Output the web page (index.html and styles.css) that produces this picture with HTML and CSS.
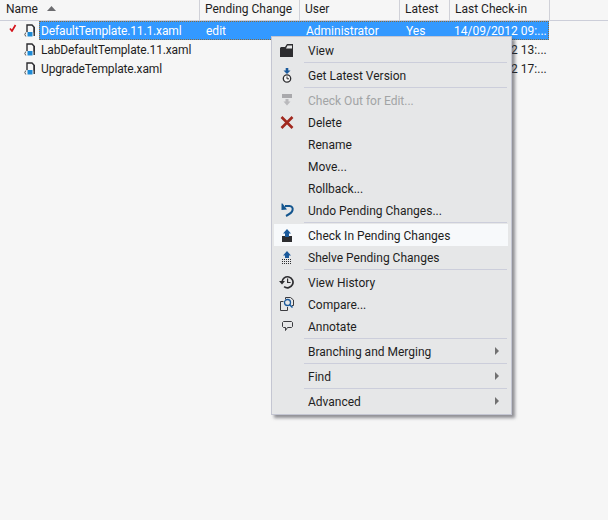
FILE: index.html
```html
<!DOCTYPE html>
<html lang="en">
<head>
<meta charset="utf-8">
<title>Source Control Explorer</title>
<link rel="stylesheet" href="styles.css">
</head>
<body>
<div class="explorer">
  <div class="header">
    <div class="hcell c-name"><span>Name</span><svg class="sort" width="9" height="5" viewBox="0 0 9 5"><path d="M0 5L4.5 0L9 5Z" fill="#6d6d70"/></svg></div>
    <div class="hcell c-pending">Pending Change</div>
    <div class="hcell c-user">User</div>
    <div class="hcell c-latest">Latest</div>
    <div class="hcell c-date">Last Check-in</div>
  </div>
  <div class="row">
    <div class="marker"><svg width="8" height="8" viewBox="0 0 8 8"><path d="M1 4.5L3 7L6.5 1" fill="none" stroke="#d4141c" stroke-width="1.7"/></svg></div>
    <svg class="fileicon" width="14" height="13" viewBox="0 0 14 13"><use href="#doc"/></svg>
    <div class="selected">
      <div class="sname">DefaultTemplate.11.1.xaml</div>
      <div class="spend">edit</div>
      <div class="suser">Administrator</div>
      <div class="slatest">Yes</div>
      <div class="sdate">14/09/2012 09:...</div>
    </div>
  </div>
  <div class="row">
    <div class="marker"></div>
    <svg class="fileicon" width="14" height="13" viewBox="0 0 14 13"><use href="#doc"/></svg>
    <div class="plain">
      <div class="pname">LabDefaultTemplate.11.xaml</div>
      <div class="pdate">14/09/2012 13:...</div>
    </div>
  </div>
  <div class="row">
    <div class="marker"></div>
    <svg class="fileicon" width="14" height="13" viewBox="0 0 14 13"><use href="#doc"/></svg>
    <div class="plain">
      <div class="pname">UpgradeTemplate.xaml</div>
      <div class="pdate">14/09/2012 17:...</div>
    </div>
  </div>
</div>

<svg class="defs" width="0" height="0" aria-hidden="true">
  <defs>
    <g id="doc">
      <path d="M3 8V1H8L10.2 3.2V8.5" fill="none" stroke="#2c2c30" stroke-width="1.4"/>
      <path d="M10.2 3V12" fill="none" stroke="#2c2c30" stroke-width="1.4"/>
      <path d="M1.8 8.5L0.8 10.5L1.8 12.5" fill="none" stroke="#555" stroke-width="1"/>
      <rect x="3.5" y="8" width="5" height="4.5" fill="#1c8ad6"/>
    </g>
  </defs>
</svg>

<div class="menu">
  <div class="item"><span class="ic"><svg width="14" height="13" viewBox="0 0 14 13"><path d="M0 4V13H13V0H7L5 3H1Z" fill="#2d2d30"/><path d="M7.5 1.5H12V4.5H6Z" fill="#e6e7e8"/></svg></span><span>View</span></div>
  <div class="sep"></div>
  <div class="item"><span class="ic"><svg width="10" height="15" viewBox="0 0 10 15"><path d="M3.7 0H6.3V2.5H8.5L5 6L1.5 2.5H3.7Z" fill="#1b5a9c"/><circle cx="5" cy="10.5" r="3.7" fill="#f5f5f5" stroke="#2d2d30" stroke-width="1.3"/><path d="M5 8.5V10.8H7" fill="none" stroke="#2d2d30"/></svg></span><span>Get Latest Version</span></div>
  <div class="sep"></div>
  <div class="item disabled"><span class="ic"><svg width="10" height="12" viewBox="0 0 10 12"><rect x="0" y="0" width="10" height="4" fill="#a9a9ac"/><path d="M3.5 5H6.5V7.5H8.5L5 11.5L1.5 7.5H3.5Z" fill="#b9b9bc"/></svg></span><span>Check Out for Edit...</span></div>
  <div class="item"><span class="ic"><svg width="14" height="13" viewBox="0 0 14 13"><path d="M1.5 1L12.5 12M12.5 1L1.5 12" stroke="#a1281e" stroke-width="2.6"/></svg></span><span>Delete</span></div>
  <div class="item"><span class="ic"></span><span>Rename</span></div>
  <div class="item"><span class="ic"></span><span>Move...</span></div>
  <div class="item"><span class="ic"></span><span>Rollback...</span></div>
  <div class="item"><span class="ic"><svg width="13" height="14" viewBox="0 0 13 14"><path d="M4 3H8.5C11 3 12 5 11.6 7C11.2 9.5 8 11.5 5 13" fill="none" stroke="#14568f" stroke-width="2"/><path d="M0.5 0.5V7L6 6.5L1.5 0.5Z" fill="#14568f"/></svg></span><span>Undo Pending Changes...</span></div>
  <div class="sep"></div>
  <div class="item active"><span class="ic"><svg width="10" height="13" viewBox="0 0 10 13"><path d="M5 0L9 4.5H7V7H3V4.5H1Z" fill="#1b5a9c"/><path d="M0 7H10V13H0Z" fill="#2d2d30"/><path d="M3 6H7V8H3Z" fill="#1b5a9c"/></svg></span><span>Check In Pending Changes</span></div>
  <div class="item"><span class="ic"><svg width="10" height="13" viewBox="0 0 10 13"><path d="M5 0L9 4.5H7V7H3V4.5H1Z" fill="#1b5a9c"/><path d="M0 8.5H10M0 10.5H10M0 12.5H10" stroke="#2d2d30" stroke-dasharray="1 1"/></svg></span><span>Shelve Pending Changes</span></div>
  <div class="sep"></div>
  <div class="item"><span class="ic"><svg width="16" height="14" viewBox="0 0 16 14"><path d="M3 7A5.5 5.5 0 1 1 5.1 11.6" fill="none" stroke="#2d2d30" stroke-width="1.7"/><path d="M0 6H6L3 9.5Z" fill="#2d2d30"/><path d="M8.6 3.5V7.5H11.6" fill="none" stroke="#2d2d30" stroke-width="1.2"/></svg></span><span>View History</span></div>
  <div class="item"><span class="ic"><svg width="14" height="14" viewBox="0 0 14 14"><path d="M5.5 2.5V0.5H10.5L13.5 3V8.5H12M3.5 4.5H0.5V13.5H7.5V10" fill="none" stroke="#3b3b3f"/><circle cx="7.5" cy="5.5" r="3" fill="none" stroke="#1b5a9c" stroke-width="1.3"/><path d="M9.5 7.5L12.5 10.5" stroke="#1b5a9c" stroke-width="1.6"/></svg></span><span>Compare...</span></div>
  <div class="item"><span class="ic"><svg width="11" height="11" viewBox="0 0 11 11"><path d="M1.5 0.5H9.5L10.5 1.5V5.5L9.5 6.5H5.5L3.5 9.5V6.5H1.5L0.5 5.5V1.5Z" fill="none" stroke="#3b3b3f"/></svg></span><span>Annotate</span></div>
  <div class="sep"></div>
  <div class="item"><span class="ic"></span><span class="grow">Branching and Merging</span><span class="arrow"></span></div>
  <div class="sep"></div>
  <div class="item"><span class="ic"></span><span class="grow">Find</span><span class="arrow"></span></div>
  <div class="sep"></div>
  <div class="item"><span class="ic"></span><span class="grow">Advanced</span><span class="arrow"></span></div>
</div>
</body>
</html>
```
FILE: styles.css
```css
* { box-sizing: border-box; }
html, body { margin: 0; padding: 0; }
body {
  width: 608px;
  height: 520px;
  overflow: hidden;
  background: #f6f6f6;
  font-family: Roboto, "Open Sans", sans-serif;
  font-size: 12px;
  color: #1e1e1e;
  position: relative;
}
.defs { position: absolute; }
.header {
  display: flex;
  height: 21px;
  border-bottom: 1px solid #ccced9;
  color: #1e1e1e;
}
.hcell {
  height: 20px;
  padding-left: 5px;
  border-right: 1px solid #d0d1d8;
  line-height: 18px;
  white-space: nowrap;
}
.c-name { width: 200px; padding-left: 6px; display: flex; align-items: flex-start; }
.sort { margin: 6px 0 0 9px; }
.c-pending { width: 100px; }
.c-user { width: 100px; }
.c-latest { width: 50px; }
.c-date { width: 100px; }
.row {
  display: flex;
  height: 19px;
  align-items: center;
  white-space: nowrap;
}
.marker { width: 24px; height: 19px; padding-left: 9px; padding-top: 3px; display: flex; align-items: flex-start; }
.fileicon { flex: none; width: 14px; margin-right: 1px; }
.selected {
  display: flex;
  width: 510px;
  height: 19px;
  line-height: 21px;
  background: #3399ff;
  color: #fff;
  outline: 1px dotted #8a6a3a;
  outline-offset: -1px;
}
.sname { width: 160px; padding-left: 2px; letter-spacing: -0.14px; }
.spend { width: 100px; padding-left: 7px; }
.suser { width: 100px; padding-left: 7px; }
.slatest { width: 49px; padding-left: 7px; }
.sdate { width: 100px; padding-left: 6px; }
.plain { display: flex; width: 510px; height: 19px; line-height: 21px; }
.pname { width: 409px; padding-left: 2px; letter-spacing: -0.14px; }
.pdate { width: 100px; padding-left: 6px; }

.menu {
  position: absolute;
  left: 271px;
  top: 36px;
  width: 241px;
  height: 379px;
  padding: 2px 2px 0 2px;
  background: #e6e7e8;
  border: 1px solid #c4c6d2;
  box-shadow: 3px 3px 3px rgba(60, 60, 70, 0.55);
  z-index: 2;
}
.item {
  display: flex;
  align-items: flex-start;
  height: 22px;
  width: 234px;
  line-height: 24px;
  white-space: nowrap;
}
.ic {
  flex: none;
  width: 28px;
  padding-right: 2px;
  margin-right: 6px;
  height: 22px;
  display: flex;
  align-items: center;
  justify-content: center;
}
.grow { flex: 1; }
.disabled { color: #a2a4a5; }
.active { background: #f7f9fb; }
.sep {
  height: 1px;
  margin: 1px 0 1px 30px;
  width: 203px;
  background: #cccedb;
}
.arrow {
  width: 0;
  height: 0;
  align-self: center;
  margin-right: 9px;
  border-left: 4px solid #717171;
  border-top: 4px solid transparent;
  border-bottom: 4px solid transparent;
}
```
